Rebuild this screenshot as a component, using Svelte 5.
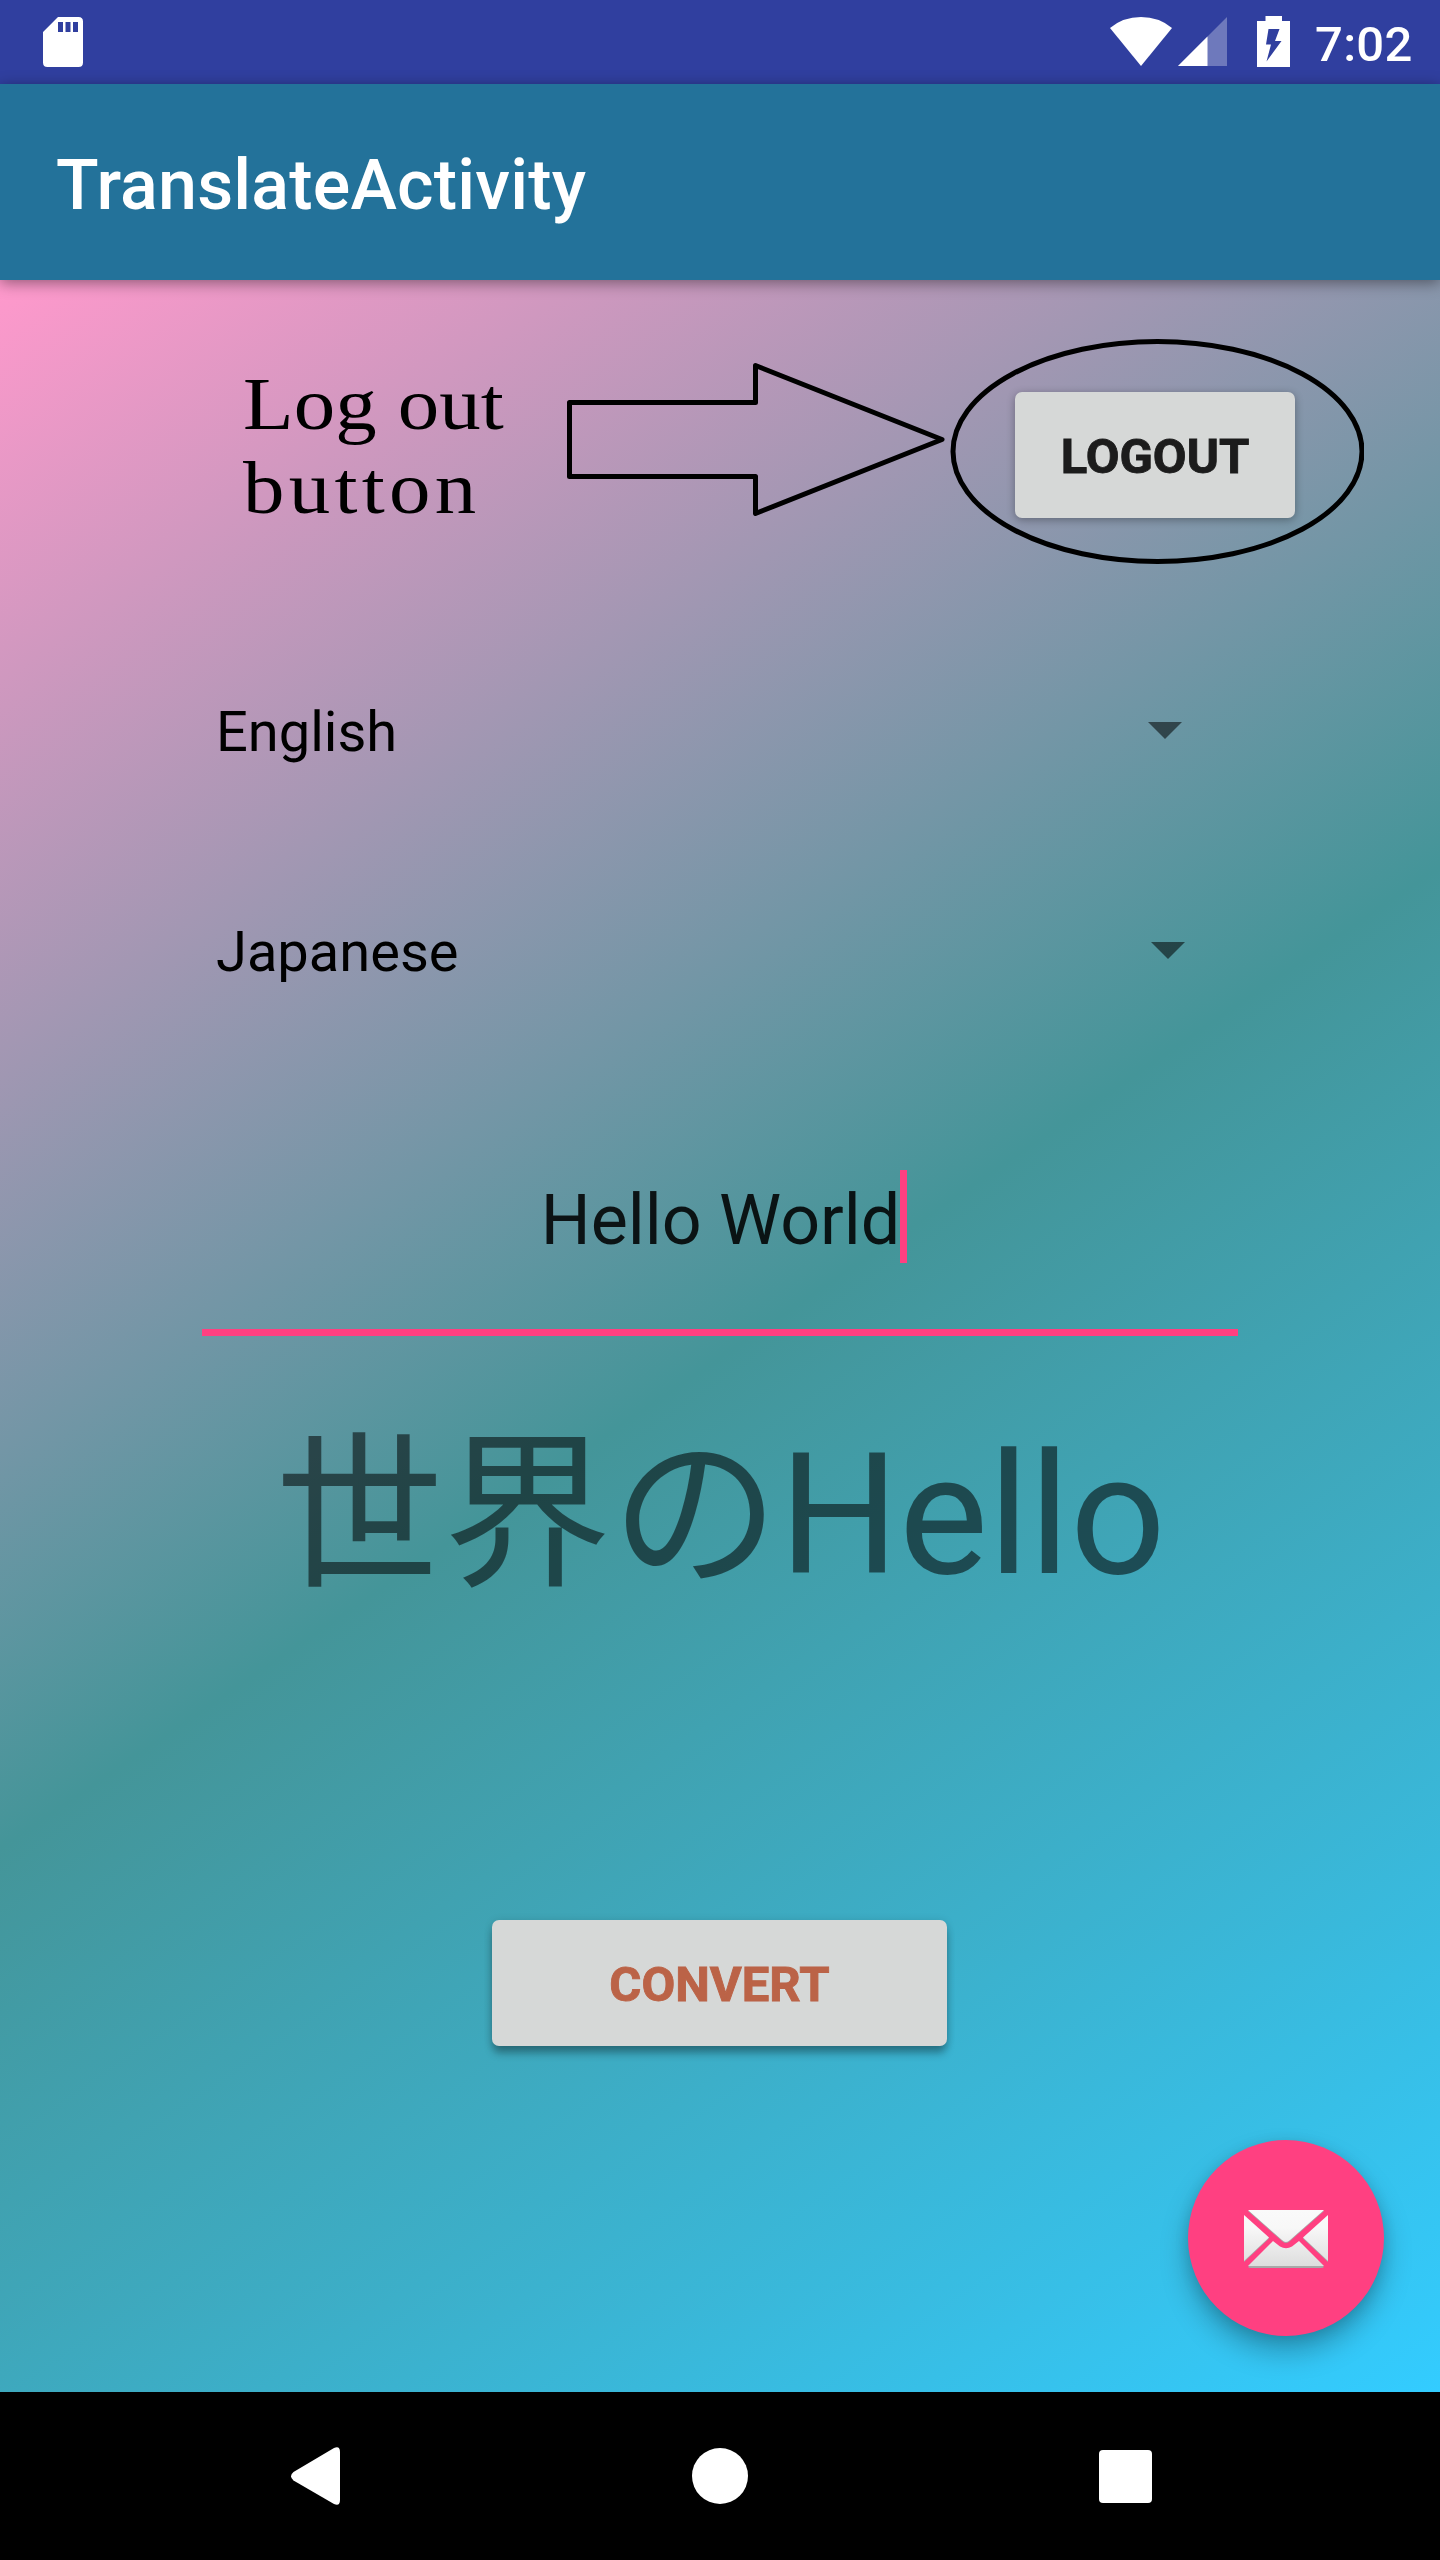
<script>
  const time = '7:02';
  const title = 'TranslateActivity';
  const source = 'English';
  const target = 'Japanese';
  const phrase = 'Hello World';
  const translated = '世界のHello';
</script>

<div class="screen">
  <header class="status">
    <svg class="sd" viewBox="0 0 40 50" width="40" height="50">
      <path fill="#fff" fill-rule="evenodd" d="M15 0H35.5Q40 0 40 4.500V45.500Q40 50 35.500 50H4.500Q0 50 0 45.500V15ZM15 5V15H20V5ZM22.500 5V15H27.500V5ZM30 5V15H35V5Z" />
    </svg>
    <div class="tray">
      <svg class="wifi" viewBox="0 0 62 49" width="62" height="49">
        <path fill="#fff" d="M0 11Q13 0 31 0T62 11L31 49Z" />
      </svg>
      <svg class="signal" viewBox="0 0 49 49" width="49" height="49">
        <path fill="#fff" fill-opacity=".3" d="M49 0V49H0Z" />
        <path fill="#fff" d="M29.500 19.500V49H0Z" />
      </svg>
      <svg class="battery" viewBox="0 0 33 51" width="33" height="51">
        <path fill="#fff" fill-rule="evenodd" d="M8.500 0H25V5H33V51H0V5H8.500ZM11.500 13L9 28.500H14L9.500 45.500L24.500 25H18L22.500 13Z" />
      </svg>
      <span class="time">{time}</span>
    </div>
  </header>

  <div class="appbar"><h1>{title}</h1></div>

  <main>
    <section class="top">
      <p class="note"><span class="l1">Log out</span><span class="l2">button</span></p>
      <svg class="arrow" viewBox="566 361 380 157" width="380" height="157">
        <path fill="none" stroke="#000" stroke-width="5" stroke-linejoin="round" d="M569.500 402.500H755.500V365.500L942 439.500L755.500 513.500V476.500H569.500Z" />
      </svg>
      <div class="ring">
        <svg class="oval" viewBox="0 0 414 226" width="414" height="226">
          <ellipse cx="207.500" cy="113.500" rx="204.500" ry="110" fill="none" stroke="#000" stroke-width="5" />
        </svg>
        <button class="logout">LOGOUT</button>
      </div>
    </section>

    <div class="spinner first">
      <span>{source}</span>
      <svg viewBox="0 0 34 17" width="34" height="17"><path d="M0 0H34L17 17Z" /></svg>
    </div>
    <div class="spinner second">
      <span>{target}</span>
      <svg viewBox="0 0 34 17" width="34" height="17"><path d="M0 0H34L17 17Z" /></svg>
    </div>

    <div class="field"><span>{phrase}</span><i class="caret"></i></div>
    <p class="result">{translated}</p>
    <button class="convert">CONVERT</button>

    <div class="fab">
      <svg viewBox="0 0 84 58" width="84" height="58">
        <defs>
          <linearGradient id="paper" gradientUnits="userSpaceOnUse" x1="0" y1="0" x2="0" y2="58">
            <stop offset="0" stop-color="#fafafa" />
            <stop offset=".3" stop-color="#f8f8f8" />
            <stop offset="1" stop-color="#dcdcdc" />
          </linearGradient>
        </defs>
        <g class="shade" transform="translate(0 1)">
          <path d="M4 0H80L46 30Q42 34 38 30Z" />
          <path d="M0 5L25 27.500L0 51Z" />
          <path d="M84 5V51L59 27.500Z" />
          <path d="M4 56L29 31L36 36.500Q42 40 48 36.500L55 31L80 56Q79 57 77 57H7Q5 57 4 56Z" />
        </g>
        <g fill="url(#paper)">
          <path d="M4 0H80L46 30Q42 34 38 30Z" />
          <path d="M0 5L25 27.500L0 51Z" />
          <path d="M84 5V51L59 27.500Z" />
          <path d="M4 56L29 31L36 36.500Q42 40 48 36.500L55 31L80 56Z" />
        </g>
      </svg>
    </div>
  </main>

  <nav>
    <svg class="back" viewBox="0 0 49 58" width="49" height="58">
      <path fill="#fff" d="M2.500 25L43 1Q49 -1.500 49 5V53Q49 59.500 43 57L2.500 33.500Q-2.500 29.200 2.500 25Z" />
    </svg>
    <span class="home"></span>
    <span class="recent"></span>
  </nav>
</div>

<style>
  :global(body) { margin: 0; }
  .screen {
    width: 1440px; height: 2560px; display: flex; flex-direction: column;
    font-family: Roboto, "Noto Sans CJK JP", sans-serif; overflow: hidden;
  }
  svg { display: block; flex: none; }
  h1, p { margin: 0; }
  button { border: 0; padding: 4px 0 0; font: 700 49px/58px Roboto, sans-serif; -webkit-text-stroke: .9px currentColor; background: #d6d8d7; border-radius: 7px; }

  .status { height: 84px; flex: none; box-sizing: border-box; background: #303f9f; display: flex; justify-content: space-between; padding: 0 29px 0 43px; }
  .sd { margin-top: 17px; }
  .tray { display: flex; align-items: flex-start; }
  .wifi, .signal { margin-top: 17px; }
  .signal { margin-left: 6px; }
  .battery { margin: 16px 25px 0 30px; }
  .time { color: #fff; font-size: 49px; font-weight: 500; line-height: 89px; width: 96px; white-space: nowrap; letter-spacing: .3px; }

  .appbar { height: 196px; flex: none; box-sizing: border-box; background: #23729a; padding: 6px 0 0 56px; display: flex; align-items: center; z-index: 1; box-shadow: 0 3px 14px rgba(0, 0, 0, .42); }
  h1 { color: #fff; font-size: 70px; font-weight: 500; line-height: 82px; letter-spacing: .18px; }

  main { position: relative; height: 2112px; flex: none; display: flex; flex-direction: column; align-items: center; background: linear-gradient(145.713deg, #ff99cc, #449599 50.7%, #33ccff); }
  .top { width: 1440px; height: 410px; box-sizing: border-box; display: flex; align-items: flex-start; padding: 58px 0 0 243px; }
  .note { width: 323px; padding-top: 24px; font: 74px/84px "Liberation Serif", serif; color: #000; }
  .note span { display: block; white-space: nowrap; transform: scaleX(1.12); transform-origin: left; }
  .l1 { letter-spacing: .1px; }
  .l2 { letter-spacing: 3.8px; }
  .arrow { margin: 23px 4px 0 0; }
  .ring { width: 414px; height: 226px; display: grid; }
  .oval, .logout { grid-area: 1 / 1; }
  .logout { width: 280px; height: 126px; margin: 54px 0 0 65px; color: #1c1c1c; box-shadow: 0 2px 8px rgba(0, 0, 0, .32); }

  .spinner { height: 84px; width: 1008px; display: flex; justify-content: space-between; align-items: center; font-size: 56px; line-height: 84px; color: #000; }
  .spinner svg { fill: rgba(0, 0, 0, .54); margin-top: -3px; }
  .first svg { margin-right: 42px; }
  .second svg { margin-right: 39px; }
  .second { margin-top: 136px; }

  .field { width: 1036px; height: 159px; margin-top: 176px; border-bottom: 7px solid #ff4081; display: flex; justify-content: center; align-items: flex-start; font-size: 70px; line-height: 100px; color: rgba(0, 0, 0, .87); }
  .field span { margin-left: 8px; }
  .caret { width: 7px; height: 93px; background: #ff4081; }
  .result { margin: 80px 0 0 1px; height: 200px; font-size: 168px; line-height: 200px; color: rgba(0, 0, 0, .54); white-space: nowrap; }
  .convert { width: 455px; height: 126px; margin: 304px 1px 0 0; color: #bb6347; box-shadow: 0 8px 9px -1px rgba(0, 0, 0, .32), 0 1px 8px rgba(0, 0, 0, .14); }

  .fab { position: absolute; right: 56px; bottom: 56px; width: 196px; height: 196px; box-sizing: border-box; padding-top: 2px; border-radius: 50%; background: #ff4081; display: flex; align-items: center; justify-content: center; box-shadow: 0 16px 28px rgba(0, 0, 0, .26), 0 3px 14px rgba(0, 0, 0, .12); }
  .shade { fill: #a8a8a8; }

  nav { height: 168px; flex: none; background: #000; display: flex; align-items: center; box-sizing: border-box; padding-left: 291px; }
  .home { width: 56px; height: 56px; border-radius: 50%; background: #fff; margin-left: 352px; }
  .recent { width: 53px; height: 53px; border-radius: 4px; background: #fff; margin-left: 351px; }
</style>
